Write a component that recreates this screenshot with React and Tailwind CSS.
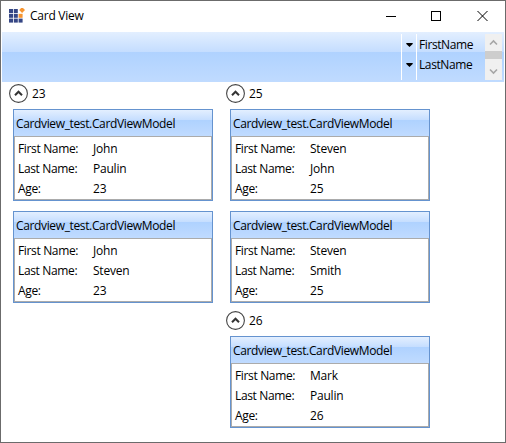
const columns = [
  [{ age: '23', cards: [['John', 'Paulin'], ['John', 'Steven']] }],
  [
    { age: '25', cards: [['Steven', 'John'], ['Steven', 'Smith']] },
    { age: '26', cards: [['Mark', 'Paulin']] },
  ],
];

function Row({ label, value }) {
  return (
    <div className="flex h-5 items-center leading-5">
      <span className="w-[75px] tracking-[-0.35px]">{label}</span>
      <span>{value}</span>
    </div>
  );
}

function Card({ first, last, age }) {
  return (
    <div className="flex h-[92px] w-[200px] flex-col border border-[#6593cf]">
      <div className="flex h-[26px] shrink-0 items-center bg-[linear-gradient(to_bottom,#e3efff_0%,#c4ddff_40%,#afd2ff_40%,#c0dbff_100%)] pl-[2px] pt-[2px] tracking-[-0.36px]">
        Cardview_test.CardViewModel
      </div>
      <div className="flex-1 border border-[#ababab] bg-white pl-[3px] pt-[2px]">
        <Row label="First Name:" value={first} />
        <Row label="Last Name:" value={last} />
        <Row label="Age:" value={age} />
      </div>
    </div>
  );
}

function Group({ age, cards }) {
  return (
    <section>
      <div className="flex h-[23px] items-center gap-[4px]">
        <svg className="-ml-[4px]" width="19" height="19" viewBox="0 0 19 19" fill="none">
          <circle cx="9.5" cy="9.5" r="8.9" stroke="#444" strokeWidth="1.1" />
          <path d="M6 11.2 9.5 7.7 13 11.2" stroke="#333" strokeWidth="2" />
        </svg>
        <span>{age}</span>
      </div>
      <div className="mt-1 flex flex-col gap-[10px]">
        {cards.map(([first, last], i) => (
          <Card key={i} first={first} last={last} age={age} />
        ))}
      </div>
    </section>
  );
}

function Logo() {
  const cells = [];
  for (let r = 0; r < 3; r++)
    for (let c = 0; c < 3; c++)
      if (!(r === 0 && c === 2))
        cells.push(
          <rect key={`${r}${c}`} x={c * 4.8} y={1 + r * 4.8} width="4" height="4" fill={r === 1 && c === 2 ? '#f79530' : '#354684'} />
        );
  return (
    <svg width="16" height="16" viewBox="0 0 16 16">
      {cells}
      <path d="M13.1 -.9 16 2 13.1 4.9 10.2 2Z" fill="#f79530" />
    </svg>
  );
}

export default function App() {
  return (
    <div className="flex h-[443px] w-[506px] flex-col border border-[#6b6b6b] bg-white font-['Open_Sans','Noto_Sans',sans-serif] text-[12px] leading-4 tracking-[-0.22px] text-black">
      <header className="mb-px flex h-[30px] shrink-0 items-center pl-[8px]">
        <Logo />
        <span className="ml-[5px] tracking-[-0.25px]">Card View</span>
        <svg className="ml-auto mr-[15px]" width="104" height="12" viewBox="0 0 104 12" fill="none" stroke="#000">
          <path d="M0 6.5H10" />
          <rect x="45.5" y="1.5" width="9" height="9" />
          <path d="m91.5 1 10 10m0-10-10 10" />
        </svg>
      </header>
      <div className="mx-px flex h-[50px] shrink-0 justify-end bg-[linear-gradient(to_bottom,#e3efff_0%,#c4ddff_40%,#afd2ff_40%,#c0dbff_100%)] py-[2px] pr-[2px]">
        <div className="flex w-[16px] flex-col items-center border-x border-white pl-px">
          <span className="flex h-[21px] items-center">
            <svg width="7" height="4" viewBox="0 0 7 4"><path d="M.3 0h6.4v1L3.5 4 .3 1Z" /></svg>
          </span>
          <span className="flex h-[20px] items-center">
            <svg width="7" height="4" viewBox="0 0 7 4"><path d="M.3 0h6.4v1L3.5 4 .3 1Z" /></svg>
          </span>
        </div>
        <div className="w-[68px] pl-[2px] pt-px tracking-[-0.4px]">
          <div className="h-5 leading-5">FirstName</div>
          <div className="h-5 leading-5">LastName</div>
        </div>
        <div className="flex w-[17px] flex-col bg-[#f0f0f0]">
          <span className="flex h-[17px] items-center justify-center">
            <svg width="9" height="7" viewBox="0 0 9 7" fill="none"><path d="M1 5.5 4.5 2 8 5.5" stroke="#a6a6a6" strokeWidth="1.6" /></svg>
          </span>
          <span className="h-[8px] bg-[#cdcdcd]" />
          <span className="flex flex-1 items-center justify-center pt-[3px]">
            <svg width="9" height="7" viewBox="0 0 9 7" fill="none"><path d="M1 1.5 4.5 5 8 1.5" stroke="#a6a6a6" strokeWidth="1.6" /></svg>
          </span>
        </div>
      </div>
      <main className="flex gap-[17px] pl-[12px]">
        {columns.map((groups, i) => (
          <div key={i} className="flex w-[200px] flex-col gap-[6px]">
            {groups.map((g) => (
              <Group key={g.age} {...g} />
            ))}
          </div>
        ))}
      </main>
    </div>
  );
}
